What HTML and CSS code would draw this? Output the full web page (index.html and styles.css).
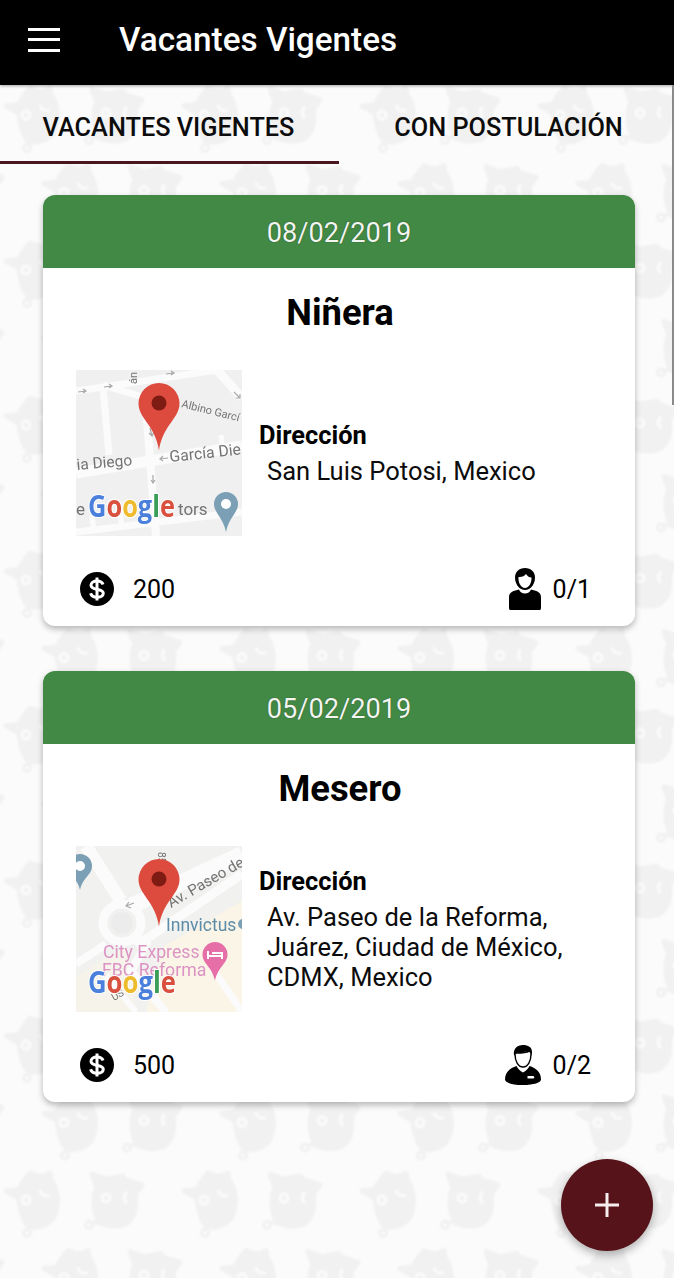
FILE: index.html
```html
<!DOCTYPE html>
<html lang="es">
<head>
<meta charset="utf-8">
<title>Vacantes Vigentes</title>
<link rel="stylesheet" href="styles.css">
</head>
<body>
<div class="app">
  <header class="topbar">
    <button class="menu" aria-label="Menú"><span></span><span></span><span></span></button>
    <h1 class="topbar-title">Vacantes Vigentes</h1>
  </header>
  <nav class="tabs">
    <div class="tab tab-active">VACANTES VIGENTES</div>
    <div class="tab tab-next">CON POSTULACIÓN</div>
  </nav>
  <main class="list">
    <article class="card">
      <div class="card-date">08/02/2019</div>
      <h2 class="card-title">Niñera</h2>
      <div class="card-body">
        <svg class="map" viewBox="0 0 166 166" width="166" height="166">
          <rect width="166" height="166" fill="#f0f0f0"/>
          <g stroke="#fbfbfb" fill="none" stroke-width="7">
            <path d="M0 21 141 0"/>
            <path d="M27 15 70 28"/>
            <path d="M27 17 33 85"/>
            <path d="M71 50 80 166" stroke-width="8"/>
            <path d="M141 0 166 28" stroke-width="9"/>
            <path d="M0 103 166 76" stroke-width="11"/>
            <path d="M0 162 166 142" stroke-width="7"/>
            <path d="M145 65 148 85" stroke-width="5"/>
            <path d="M16 145 18 162" stroke-width="5"/>
            <path d="M44 140 46 160" stroke-width="5"/>
          </g>
          <g stroke="#a9a9a9" fill="none" stroke-width="1.2">
            <path d="M2 22 10 21M7 19 10 21 7 23"/>
            <path d="M28 17 36 16M33 14 36 16 33 18"/>
            <path d="M90 4 98 3M95 1 98 3 95 5"/>
            <path d="M74 58 76 66M73 63 76 66 78 62"/>
            <path d="M92 88 84 89M87 86 84 89 87 91"/>
            <path d="M77 105 77 113M75 110 77 113 79 110"/>
            <path d="M158 22 164 28M164 24 164 28 160 28"/>
          </g>
          <text class="map-label" font-size="15.500" transform="translate(1 100) rotate(-5)">ia Diego</text>
          <text class="map-label" font-size="15.800" transform="translate(94 92) rotate(-6)">García Die</text>
          <text class="map-label" font-size="11" transform="translate(105 37) rotate(14)">Albino Garcí</text>
          <text class="map-label" font-size="11" transform="translate(61 14) rotate(-90)">án</text>
          <text class="map-label" font-size="17" x="0" y="145">e</text>
          <text class="map-label" font-size="17" x="102" y="145">tors</text>
          <path class="place" d="M150 122a12 12 0 0 1 12 12c0 9-9 13-12 28-3-15-12-19-12-28a12 12 0 0 1 12-12z"/>
          <circle cx="150" cy="134" r="5" fill="#fff"/>
          <text class="google" x="12" y="147" textLength="87" lengthAdjust="spacingAndGlyphs"><tspan fill="#4a7fdc">G</tspan><tspan fill="#d9503f">o</tspan><tspan fill="#eebb2e">o</tspan><tspan fill="#4a7fdc">g</tspan><tspan fill="#3b9e58">l</tspan><tspan fill="#d9503f">e</tspan></text>
          <path class="pin" d="M83 13a20.500 20.500 0 0 1 20.500 20.500c0 15-17 22-20.500 47-3.500-25-20.500-32-20.500-47A20.500 20.500 0 0 1 83 13z"/>
          <circle cx="83" cy="33" r="7.500" fill="#7e1b12"/>
        </svg>
        <div class="place-info">
          <div class="place-label">Dirección</div>
          <div class="place-address">San Luis Potosi, Mexico</div>
        </div>
      </div>
      <div class="card-foot">
        <div class="stat">
          <svg class="money" viewBox="0 0 34 34" width="34" height="34">
            <circle cx="17" cy="17" r="17" fill="#000"/>
            <path d="M23 12.500c-.8-2.500-3-3.500-6-3.500-3.500 0-6 1.700-6 4.200 0 6 12.300 2.500 12.300 8 0 2.500-2.700 4-6.300 4-3.300 0-5.600-1.300-6.400-4" fill="none" stroke="#fff" stroke-width="3"/>
            <path d="M17 5.500v23" stroke="#fff" stroke-width="3"/>
          </svg>
          <span>200</span>
        </div>
        <div class="stat stat-end">
          <svg class="person" viewBox="0 0 32 42" width="32" height="42">
            <path d="M16 0c-6 0-10 4-10 9.500 0 4 1.500 7.500 4 10 1.500 1.500 3.500 2.500 6 2.500s4.500-1 6-2.500c2.500-2.500 4-6 4-10C26 4 22 0 16 0z"/>
            <path d="M9.500 9c3 .5 6-1 7.500-3 1.500 2.500 3.500 3.500 5.500 3.500.3 5-2.500 10.500-6.500 10.500S9 14.500 9.500 9z" fill="#fff"/>
            <path d="M10 21.500c1 2.500 3.200 4 6 4s5-1.500 6-4c5 1 10 2.500 10 7.500v11c0 1.500-1 2.500-2.500 2.500h-27C1 42.500 0 41.500 0 40V29c0-5 5-6.500 10-7.500z"/>
          </svg>
          <span>0/1</span>
        </div>
      </div>
    </article>

    <article class="card">
      <div class="card-date">05/02/2019</div>
      <h2 class="card-title">Mesero</h2>
      <div class="card-body">
        <svg class="map" viewBox="0 0 166 166" width="166" height="166">
          <rect width="166" height="166" fill="#f1f1ef"/>
          <path d="M88 100 166 55V166H70z" fill="#fbf5e7"/>
          <path d="M0 130 50 100 60 166H0z" fill="#f6f3ea"/>
          <g stroke="#fbfbfb" fill="none">
            <path d="M10 0 45 55" stroke-width="13"/>
            <path d="M55 60 166 8" stroke-width="16"/>
            <path d="M60 100 166 28" stroke-width="9"/>
            <circle cx="46" cy="77" r="19" stroke-width="9"/>
            <path d="M0 118 30 98" stroke-width="8"/>
            <path d="M72 95 55 125 90 166" stroke-width="8"/>
            <path d="M135 120 166 166" stroke-width="7"/>
            <path d="M30 130 60 166" stroke-width="6"/>
          </g>
          <circle cx="46" cy="77" r="11" fill="#ececec"/>
          <path d="M58 57 50 60M53 56 50 60 55 62" stroke="#a9a9a9" stroke-width="1.200" fill="none"/>
          <path class="place" d="M4 8a12 12 0 0 1 12 12c0 9-9 11-12 24-3-13-12-15-12-24A12 12 0 0 1 4 8z"/>
          <circle cx="4" cy="20" r="5" fill="#fff"/>
          <text class="map-label" font-size="15" transform="translate(95 62) rotate(-30)">Av. Paseo de</text>
          <text class="map-label" font-size="10" transform="translate(82 6) rotate(90)">85</text>
          <text class="map-blue" font-size="17.500" x="90" y="85">Innvictus</text>
          <circle cx="167" cy="78" r="5" fill="#7ba0b5"/>
          <text class="map-pink" font-size="17.700" x="27" y="112">City Express</text>
          <text class="map-pink" font-size="17.700" x="26" y="130">FBC Reforma</text>
          <path d="M139 96a12.500 12.500 0 0 1 12.500 12.500c0 9-9.500 12-12.500 26-3-14-12.500-17-12.500-26A12.500 12.500 0 0 1 139 96z" fill="#e66fa8"/>
          <path d="M132 113v-8M132 110h14v3M136 107h10v3" stroke="#fff" stroke-width="2" fill="none"/>
          <text class="map-label" font-size="10" transform="translate(38 155) rotate(-30)">US</text>
          <text class="google" x="12" y="147" textLength="88" lengthAdjust="spacingAndGlyphs"><tspan fill="#4a7fdc">G</tspan><tspan fill="#d9503f">o</tspan><tspan fill="#eebb2e">o</tspan><tspan fill="#4a7fdc">g</tspan><tspan fill="#3b9e58">l</tspan><tspan fill="#d9503f">e</tspan></text>
          <path class="pin" d="M83 13a20.500 20.500 0 0 1 20.500 20.500c0 15-17 22-20.500 47-3.500-25-20.500-32-20.500-47A20.500 20.500 0 0 1 83 13z"/>
          <circle cx="83" cy="33" r="7.500" fill="#7e1b12"/>
        </svg>
        <div class="place-info">
          <div class="place-label">Dirección</div>
          <div class="place-address">Av. Paseo de la Reforma,<br>Juárez, Ciudad de México,<br>CDMX, Mexico</div>
        </div>
      </div>
      <div class="card-foot">
        <div class="stat">
          <svg class="money" viewBox="0 0 34 34" width="34" height="34">
            <circle cx="17" cy="17" r="17" fill="#000"/>
            <path d="M23 12.500c-.8-2.500-3-3.500-6-3.500-3.500 0-6 1.700-6 4.200 0 6 12.300 2.500 12.300 8 0 2.500-2.700 4-6.300 4-3.300 0-5.600-1.300-6.400-4" fill="none" stroke="#fff" stroke-width="3"/>
            <path d="M17 5.500v23" stroke="#fff" stroke-width="3"/>
          </svg>
          <span>500</span>
        </div>
        <div class="stat stat-end">
          <svg class="person" viewBox="0 0 36 40" width="36" height="40">
            <path d="M9 10C8 4 12 0 18 0c5 0 9 2 9 7 0 2-.5 3-1 4-1-3-3-4.500-5-4.500-3 1-7 1-9 1-.5 1-1 2-1 3.500z"/>
            <path d="M10 9c0 7 3 13 8 13s8-6 8-13v-1c-1-1-1.500-2-1.500-2-3 1.500-9 2-13 2z" fill="#fff" stroke="#000" stroke-width="1.400"/>
            <path d="M11.500 21c1.500 3 3.500 5 6.500 6.500 3-1.500 5-3.500 6.500-6.500C31 23 36 27 36 34.500c0 3-7 5.500-18 5.500S0 37.500 0 34.500C0 27 5 23 11.500 21z"/>
            <path d="M22.500 31h6l1 1.500-1 1h-6z" fill="#fff"/>
          </svg>
          <span>0/2</span>
        </div>
      </div>
    </article>
  </main>
  <div class="scroll-thumb"></div>
  <button class="fab" aria-label="Agregar">
    <svg viewBox="0 0 26 26" width="26" height="26"><path d="M13 1v24M1 13h24" stroke="#f6eeee" stroke-width="3" fill="none"/></svg>
  </button>
</div>
</body>
</html>
```
FILE: styles.css
```css
* { box-sizing: border-box; }
html, body { margin: 0; padding: 0; }
body {
  font-family: Roboto, "Liberation Sans", sans-serif;
  color: #000;
  background: #fbfbfb;
}
.app {
  position: relative;
  width: 674px;
  height: 1278px;
  overflow: hidden;
  display: flex;
  flex-direction: column;
  background-color: #fbfbfb;
  background-position: 0 72px;
  background-size: 178px 155px;
  background-image: url("data:image/svg+xml,%3Csvg xmlns='http://www.w3.org/2000/svg' xmlns:xlink='http://www.w3.org/1999/xlink' width='178' height='155' viewBox='0 0 178 155'%3E%3Cdefs%3E%3Cfilter id='s' x='-10%25' y='-10%25' width='120%25' height='120%25'%3E%3CfeGaussianBlur stdDeviation='.8'/%3E%3C/filter%3E%3Cg id='a'%3E%3Cpath d='M-15-15C-8-24 10-27 18-18 27-8 27 14 19 24 10 34-8 36-12 26-18 14-21-5-15-15Z' fill='%23f1f1f1'/%3E%3Cpath d='M-12-8-29-6-11 4ZM-10-18-5-24 5-20ZM5-19 15-24 17-8Z' fill='%23f1f1f1' stroke='%23f1f1f1' stroke-width='5' stroke-linejoin='round'/%3E%3Ccircle cx='-8' cy='36' r='5' fill='%23f1f1f1'/%3E%3Ccircle cx='-8' cy='36' r='2' fill='%23fbfbfb'/%3E%3Ccircle cx='-9' cy='3' r='5.500' fill='%23fbfbfb'/%3E%3Ccircle cx='-9' cy='3' r='2.500' fill='%23f1f1f1'/%3E%3Cpath d='M5-7a7 7 0 0 0 10 5' fill='none' stroke='%23fbfbfb' stroke-width='3'/%3E%3C/g%3E%3Cg id='b'%3E%3Cpath d='M-20-12C-14-22 14-24 20-12 26 2 24 22 12 29-2 35-16 31-21 20-25 8-24-3-20-12Z' fill='%23f1f1f1'/%3E%3Cpath d='M-23-23-6-17-17-7ZM27-12 8-18 18 0ZM-8-18 8-21 10-14Z' fill='%23f1f1f1' stroke='%23f1f1f1' stroke-width='5' stroke-linejoin='round'/%3E%3Ccircle cx='-26' cy='28' r='5' fill='%23f1f1f1'/%3E%3Ccircle cx='-26' cy='28' r='2' fill='%23fbfbfb'/%3E%3Cpath d='M-25 25-12 20-12 30Z' fill='%23f1f1f1'/%3E%3Ccircle cx='-9' cy='1' r='5.500' fill='%23fbfbfb'/%3E%3Ccircle cx='-9' cy='1' r='2.500' fill='%23f1f1f1'/%3E%3Cpath d='M12-5a7 7 0 0 0 0 11' fill='none' stroke='%23fbfbfb' stroke-width='3'/%3E%3C/g%3E%3C/defs%3E%3Cg filter='url(%23s)'%3E%3Cuse xlink:href='%23a' x='35' y='40'/%3E%3Cuse xlink:href='%23a' x='213' y='40'/%3E%3Cuse xlink:href='%23b' x='115' y='40'/%3E%3Cuse xlink:href='%23a' x='73' y='117.500'/%3E%3Cuse xlink:href='%23b' x='153' y='117.500'/%3E%3Cuse xlink:href='%23b' x='-25' y='117.500'/%3E%3Cuse xlink:href='%23a' x='73' y='-37.500'/%3E%3Cuse xlink:href='%23b' x='153' y='-37.500'/%3E%3Cuse xlink:href='%23b' x='-25' y='-37.500'/%3E%3C/g%3E%3C/svg%3E");
}

/* Top bar */
.topbar {
  flex: none;
  height: 85px;
  display: flex;
  align-items: center;
  padding: 0 0 6px 28px;
  gap: 59px;
  background: #000;
  color: #fff;
  box-shadow: 0 1px 3px rgba(0,0,0,.35);
}
.menu {
  width: 32px;
  display: flex;
  flex-direction: column;
  gap: 7.500px;
  padding: 0;
  border: 0;
  background: none;
}
.menu span { display: block; height: 3px; background: #fff; }
.topbar-title { margin: 0; font-size: 33.300px; font-weight: 500; line-height: 1; }

/* Tabs */
.tabs { flex: none; height: 79px; display: flex; }
.tab {
  flex: 0 0 335px;
  display: flex;
  align-items: center;
  justify-content: center;
  padding-top: 5px;
  font-size: 25.300px;
  font-weight: 500;
  color: #0c0c0c;
}
.tab-active { flex-basis: 339px; border-bottom: 3px solid #4b1520; padding: 8px 2px 0 0; }
.tab-next { padding-left: 4px; }

/* Cards */
.list {
  flex: 1;
  display: flex;
  flex-direction: column;
  gap: 45px;
  padding: 31px 39px 0 43px;
}
.card {
  height: 431px;
  display: flex;
  flex-direction: column;
  background: #fff;
  border-radius: 12px;
  box-shadow: 0 3px 6px rgba(0,0,0,.28);
}
.card-date {
  flex: none;
  height: 73px;
  padding-top: 3px;
  display: flex;
  align-items: center;
  justify-content: center;
  background: #418944;
  border-radius: 12px 12px 0 0;
  color: #f2f5f0;
  font-size: 27.200px;
  text-shadow: 0 0 1px #1d3a1c;
}
.card-title {
  margin: 0;
  height: 102px;
  padding: 23px 0 0 2px;
  text-align: center;
  font-size: 36.400px;
  font-weight: 700;
  line-height: 44px;
}
.card-body { flex: none; display: flex; align-items: center; gap: 17px; padding-left: 33px; }
.map { flex: none; display: block; filter: blur(.5px); }
.map-label { font-family: Roboto, sans-serif; fill: #737373; }
.map-blue { font-family: Roboto, sans-serif; fill: #5b8ca8; }
.map-pink { font-family: Roboto, sans-serif; fill: #dc93c4; }
.google { font-family: "Open Sans", sans-serif; font-size: 30px; font-weight: 700; stroke: #fff; stroke-width: 2px; paint-order: stroke; }
.pin { fill: #dd4b3e; }
.place { fill: #7ba0b5; }
.place-info { display: flex; flex-direction: column; }
.place-label { font-size: 25.400px; font-weight: 700; line-height: 30px; margin-bottom: 6px; }
.place-address { padding-left: 8px; font-size: 25.500px; line-height: 30px; color: #0c0c0c; }

.card-foot {
  flex: 1;
  display: flex;
  align-items: center;
  justify-content: space-between;
  padding: 16px 44px 0 37px;
}
.stat { display: flex; align-items: center; gap: 19px; font-size: 25px; }
.stat-end { gap: 12px; }
.money { display: block; }
.person { display: block; }

/* Overlays */
.scroll-thumb {
  position: absolute;
  top: 85px;
  right: 0;
  width: 2px;
  height: 320px;
  background: #8a8a8a;
}
.fab {
  position: absolute;
  left: 561px;
  top: 1159px;
  width: 92px;
  height: 92px;
  display: flex;
  align-items: center;
  justify-content: center;
  padding: 0;
  border: 0;
  border-radius: 50%;
  background: #561319;
  box-shadow: 0 4px 10px rgba(0,0,0,.3);
}
.fab svg { display: block; }
```
